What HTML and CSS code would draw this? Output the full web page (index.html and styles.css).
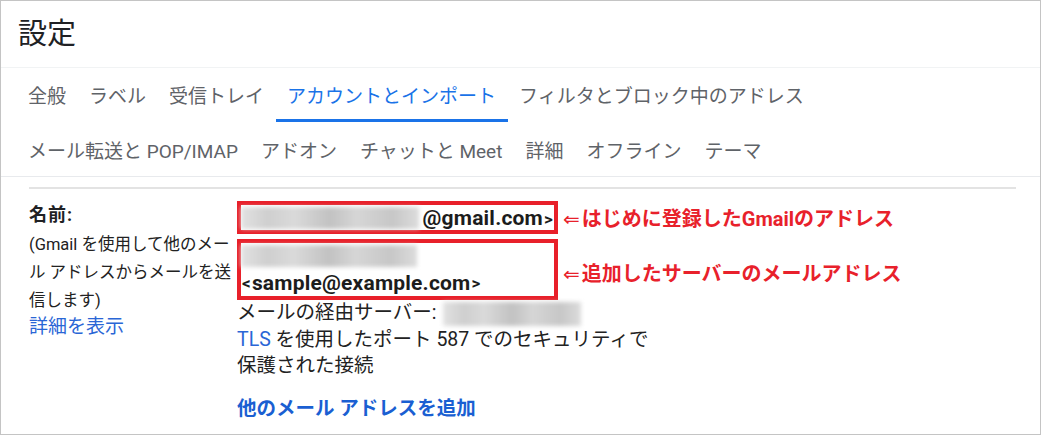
FILE: index.html
```html
<!DOCTYPE html>
<html lang="ja">
<head>
<meta charset="UTF-8">
<title>設定</title>
<link rel="stylesheet" href="styles.css">
</head>
<body>

<div class="frame">
  <div class="header">
    <h1 class="title">設定</h1>
  </div>

  <div class="tabs">
    <div class="tab-row">
      <span class="tab">全般</span>
      <span class="tab">ラベル</span>
      <span class="tab">受信トレイ</span>
      <span class="tab active">アカウントとインポート</span>
      <span class="tab">フィルタとブロック中のアドレス</span>
    </div>
    <div class="tab-row">
      <span class="tab">メール転送と POP/IMAP</span>
      <span class="tab">アドオン</span>
      <span class="tab">チャットと Meet</span>
      <span class="tab">詳細</span>
      <span class="tab">オフライン</span>
      <span class="tab">テーマ</span>
    </div>
  </div>

  <div class="section">
    <div class="row">
      <div class="label-col">
        <div class="label">名前:</div>
        <div class="desc">(Gmail を使用して他のメー<br>ル アドレスからメールを送<br>信します)</div>
        <a class="link" href="#">詳細を表示</a>
      </div>

      <div class="value-col">
        <div class="mark-row">
          <div class="mark first">
            <span class="blur wide"></span><span class="addr">@gmail.com<span class="br">&gt;</span></span>
          </div>
          <span class="note"><span class="arrow">⇐</span>はじめに登録したGmailのアドレス</span>
        </div>

        <div class="mark-row">
          <div class="mark second">
            <div class="line"><span class="blur mid"></span></div>
            <div class="line addr"><span class="br">&lt;</span>sample@example.com<span class="br">&gt;</span></div>
          </div>
          <span class="note"><span class="arrow">⇐</span>追加したサーバーのメールアドレス</span>
        </div>

        <div class="info">
          <div>メールの経由サーバー: <span class="blur small"></span></div>
          <div><a class="tls" href="#">TLS</a> を使用したポート 587 でのセキュリティで</div>
          <div>保護された接続</div>
        </div>

        <a class="add" href="#">他のメール アドレスを追加</a>
      </div>
    </div>
  </div>
</div>

</body>
</html>
```

FILE: styles.css
```css
/* page frame */
body {
  margin: 0;
  background: #ffffff;
  font-family: "Roboto", "Noto Sans CJK JP", sans-serif;
  color: #222222;
}

.frame {
  width: 1041px;
  height: 435px;
  box-sizing: border-box;
  border: 1px solid #c4c4c4;
  overflow: hidden;
}

/* title */
.header {
  height: 66px;
  border-bottom: 1px solid #f1f3f4;
  display: flex;
  align-items: center;
  padding-left: 17px;
}

.title {
  margin: 0;
  font-size: 29px;
  font-weight: 400;
  color: #202124;
  line-height: 1;
}

/* tabs */
.tabs {
  border-bottom: 1px solid #e8eaed;
  padding-left: 15.5px;
}

.tab-row {
  display: flex;
  height: 54px;
}

.tab {
  padding: 1px 11.5px 0;
  font-size: 19px;
  color: #5f6368;
  display: flex;
  align-items: center;
  white-space: nowrap;
  border-bottom: 3px solid transparent;
}

.tab-row + .tab-row .tab {
  padding-top: 4px;
}

.tab.active {
  color: #1a73e8;
  border-bottom-color: #1a73e8;
}

/* account section */
.section {
  margin: 10px 24px 0 28px;
  border-top: 2px solid #e3e3e3;
}

.row {
  display: flex;
  padding-top: 12px;
}

.label-col {
  width: 208px;
  flex: none;
}

.label {
  font-size: 18px;
  font-weight: 700;
  line-height: 28px;
  color: #202124;
  letter-spacing: 1px;
}

.desc {
  margin-top: 2px;
  font-size: 16.5px;
  line-height: 28px;
  color: #222222;
  white-space: nowrap;
}

.link {
  display: block;
  font-size: 19px;
  line-height: 24px;
  color: #2a66d6;
  text-decoration: none;
}

.value-col {
  font-size: 19.5px;
}

.mark-row {
  display: flex;
  align-items: center;
  gap: 5px;
}

.mark-row + .mark-row {
  margin-top: 5px;
}

.mark {
  width: 321px;
  box-sizing: border-box;
  border: 4px solid #e8202a;
}

.mark.first {
  height: 33px;
  display: flex;
  align-items: center;
}

.mark.second {
  height: 61px;
}

.mark .line {
  height: 26.5px;
  display: flex;
  align-items: center;
}

.addr {
  font-weight: 700;
  font-size: 21px;
  color: #1c1c1c;
  white-space: nowrap;
  letter-spacing: 0.2px;
}

.addr .br {
  font-size: 17px;
  margin: 0 1px;
}

.note {
  font-size: 20px;
  font-weight: 700;
  color: #e8212b;
  white-space: nowrap;
}

.arrow {
  font-weight: 400;
  font-family: "DejaVu Sans", sans-serif;
  font-size: 20px;
  margin-right: 2px;
}

.mark-row + .mark-row .note {
  margin-top: 5px;
}

/* blurred personal data */
.blur {
  display: inline-block;
  height: 22px;
  vertical-align: middle;
  background: linear-gradient(90deg, #e2e2e2, #cfcfcf 15%, #dadada 30%, #c2c2c2 50%, #d6d6d6 65%, #c7c7c7 85%, #dcdcdc);
  filter: blur(2px);
}

.blur.wide {
  width: 178px;
  margin-right: 4px;
}

.blur.mid {
  width: 176px;
}

.blur.small {
  width: 138px;
  margin-left: 2px;
  height: 24px;
}

.info {
  line-height: 26.5px;
  color: #222222;
  white-space: nowrap;
}

.tls {
  color: #2a66d6;
  text-decoration: none;
}

.add {
  display: block;
  margin-top: 16px;
  line-height: 26px;
  font-weight: 700;
  color: #1a5fd2;
  text-decoration: none;
}
```
